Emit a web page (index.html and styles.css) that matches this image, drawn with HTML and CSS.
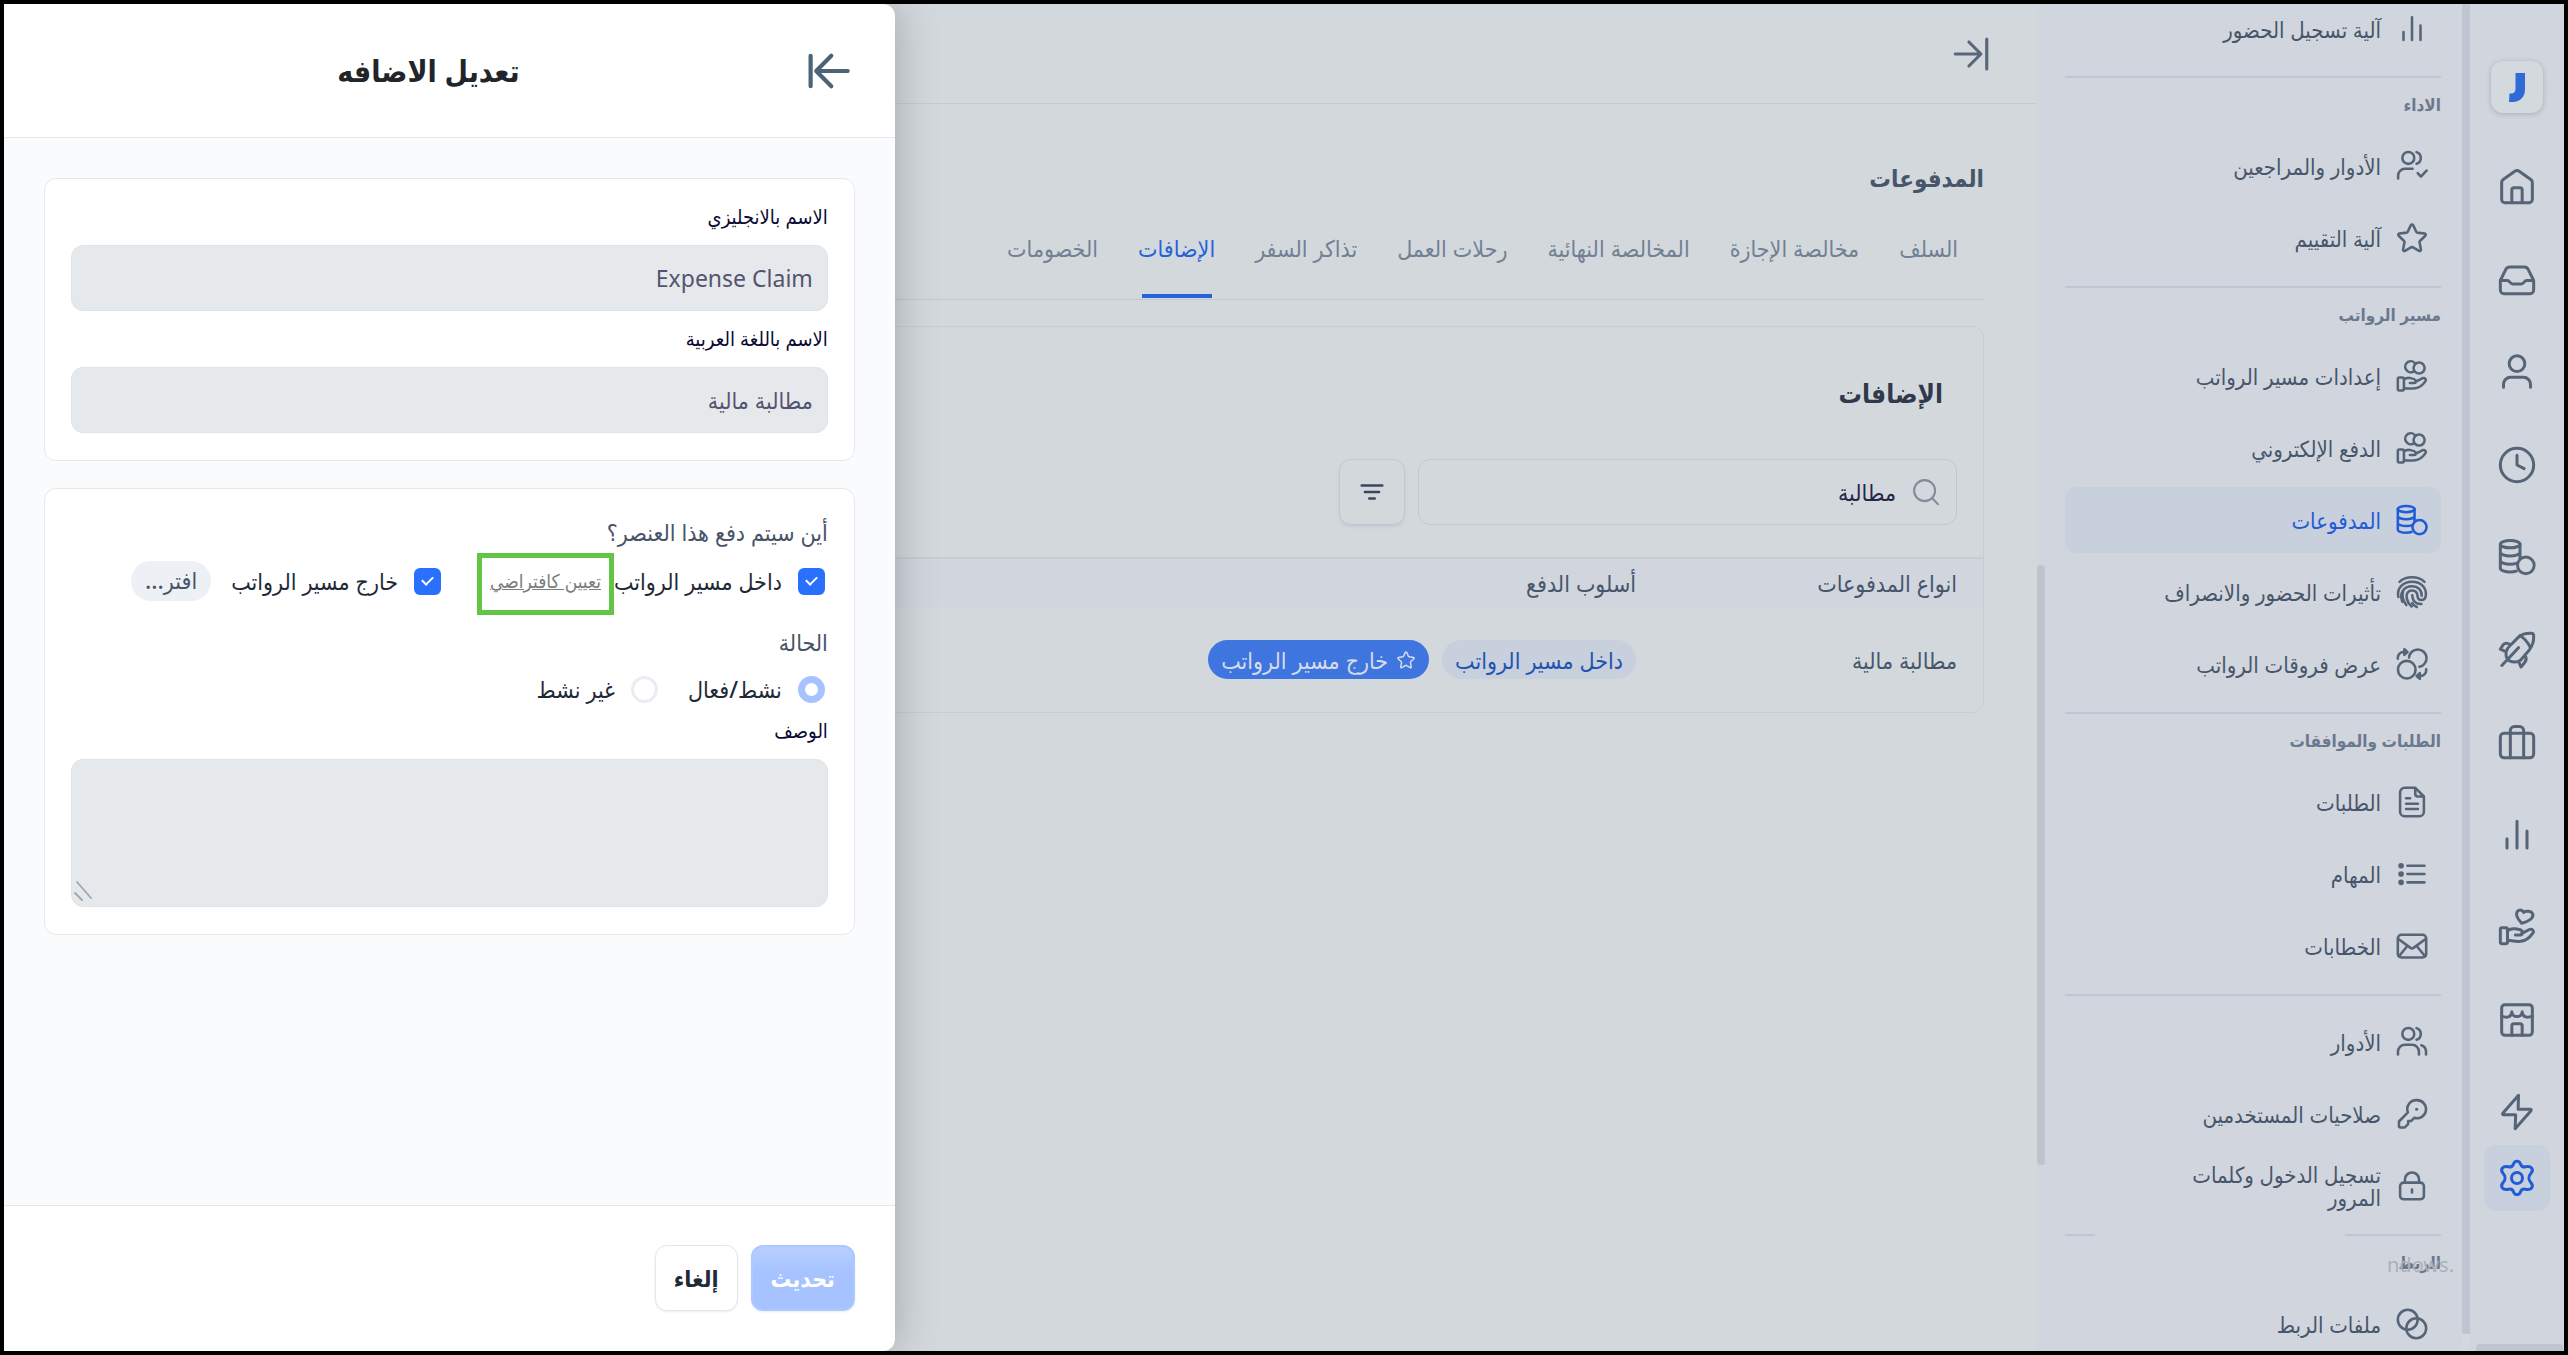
FILE: index.html
```html
<!DOCTYPE html>
<html lang="ar" dir="rtl">
<head>
    <meta charset="UTF-8">
    <meta name="viewport" content="width=device-width, initial-scale=1.0">
    <title>المدفوعات</title>
    <link rel="stylesheet" href="styles.css">
</head>
<body>

    <!-- icon set -->
    <svg class="icon-set" aria-hidden="true">
        <symbol id="i-bars" viewBox="0 0 24 24"><path d="M6 14.2v5.6M12 3.8v16M18 9.6v10.2"/></symbol>
        <symbol id="i-user-check" viewBox="0 0 24 24"><circle cx="9.4" cy="6.3" r="4.2"/><path d="M15.2 2.2a4.3 4.3 0 0 1 0 8.2M2.2 20.8v-2a4.8 4.8 0 0 1 4.8-4.8h5.4M16 17l2.3 2.5 4-4.3"/></symbol>
        <symbol id="i-users" viewBox="0 0 24 24"><circle cx="9.4" cy="6.3" r="4.2"/><path d="M15.2 2.2a4.3 4.3 0 0 1 0 8.2M2.1 20.8v-2A4.8 4.8 0 0 1 6.9 14h5.2a4.8 4.8 0 0 1 4.8 4.8v2M18.6 14.3a4.8 4.8 0 0 1 3.3 4.5v2"/></symbol>
        <symbol id="i-star" viewBox="0 0 24 24"><path d="M11.2 2.9a.9.9 0 0 1 1.6 0l2.3 4.9c.1.2.3.4.6.4l5.2.7c.8.1 1.1 1 .5 1.5l-3.8 3.7c-.2.2-.3.5-.3.7l1 5.4c.1.7-.6 1.3-1.3.9l-4.6-2.6a.9.9 0 0 0-.8 0L7 21.1c-.7.4-1.4-.2-1.3-.9l1-5.4c0-.2 0-.5-.3-.7l-3.8-3.7c-.6-.5-.3-1.4.5-1.5l5.2-.7c.3 0 .5-.2.6-.4z"/></symbol>
        <symbol id="i-hand-coins" viewBox="0 0 24 24"><circle cx="17" cy="6.4" r="3.9"/><path d="M13 8.900a3.900 3.900 0 1 1 1.500-5.400"/><rect x="2" y="13" width="4.300" height="9.200" rx="1"/><path d="M6.300 14.400c1.600-1.100 3.200-1.300 4.700-.9l2.500.7c1.500.4 1.600 2.600 0 2.700h-3M14.300 16.200l5-2.600c1.600-.7 3.100.7 2.100 2.200-1.800 2.600-4.400 4.600-7.200 4.900-2.800.3-5 .3-7.900-.2"/></symbol>
        <symbol id="i-hand-heart" viewBox="0 0 24 24"><path d="M14.8 9.8C12.600 7.400 11 5 12 3c.9-1.700 3.200-1.500 4 .2 1.500-1.100 4.600-.9 5.400.9.900 2.600-2.200 4.400-6.600 5.700z"/><rect x="2" y="12.500" width="4.300" height="9.500" rx="1"/><path d="M6.300 14.200c1.600-1.100 3.200-1.400 4.700-1.100l3 .6c1.700.5 1.500 2.900 0 3.100h-3M14.700 16l4.700-2.500c1.600-.7 3.100.7 2.100 2.200-1.800 2.600-4.400 4.600-7.200 4.900-2.800.3-5-.3-8-.6"/></symbol>
        <symbol id="i-coins" viewBox="0 0 24 24"><ellipse cx="7.9" cy="4.3" rx="5.9" ry="2.2"/><path d="M2 4.300v14.500c0 1.200 2.600 2.200 5.900 2.200 1.400 0 2.700-.2 3.700-.5M13.800 4.300v8.600M2 9.200c0 1.200 2.600 2.200 5.900 2.200s5.900-1 5.900-2.200M2 14.100c0 1.200 2.600 2.200 5.900 2.200 1.400 0 2.700-.2 3.700-.5"/><circle cx="17.300" cy="17" r="5"/></symbol>
        <symbol id="i-finger" viewBox="0 0 24 24"><path d="M3.200 4.800C5.500 2.600 8.600 1.600 12 1.600s6.500 1 8.800 3.200M2.400 15.500C1 9.300 5.600 4.800 12 4.800s10.600 4.200 9.700 10c-.5 3.800-5.600 3.700-5.800.1-.1-2.300-1.500-3.900-3.900-3.900-2.700 0-4.200 1.900-3.800 4.700.4 2.700 1.600 4.800 3.500 6.500M5.200 18.900C2.900 12.500 6.200 7.900 12 7.900c4.200 0 6.900 2.700 6.900 6.700M8 21.200c-2.500-3.500-3.300-6.700-2.300-9.300M12.200 14.300c.1 4 2.500 6.500 6.400 6.200M15.400 22.600c-1.600-.6-2.600-1.500-3.300-2.700"/></symbol>
        <symbol id="i-swap" viewBox="0 0 24 24"><circle cx="8.3" cy="16" r="6.2"/><path d="M9.900 7.400A6.200 6.200 0 1 1 17.200 14M2 8.300v-.8a4 4 0 0 1 4-4h1M22 15.700v.8a4 4 0 0 1-4 4h-1"/><path class="solid" d="M6.600 1.600l2.200 1.900-2.200 2.100zM17.500 18.400l-2.200 2.100 2.200 2z"/></symbol>
        <symbol id="i-doc" viewBox="0 0 24 24"><path d="M14.300 2H6.800A3.200 3.200 0 0 0 3.600 5.200v13.600A3.200 3.200 0 0 0 6.800 22h10.400a3.200 3.200 0 0 0 3.200-3.200V8.100zM14.300 2v4.400c0 1 .7 1.700 1.700 1.700h4.400M7.800 9.300h2.900M7.800 13.300h8.400M7.800 17h8.400"/></symbol>
        <symbol id="i-list" viewBox="0 0 24 24"><path d="M8.800 6.200h12M8.800 12h12M8.800 17.900h12"/><path class="dot" d="M4.300 6.200h0M4.300 12h0M4.300 17.900h0"/></symbol>
        <symbol id="i-mail" viewBox="0 0 24 24"><rect x="2" y="4.100" width="20" height="16" rx="2.500"/><path d="M2.600 7.200l8.600 6.300c.5.400 1.100.4 1.600 0l8.600-6.300M2.800 19.200L8.700 12M21.200 19.200L15.300 12"/></symbol>
        <symbol id="i-key" viewBox="0 0 24 24"><path d="M15.200 2.200a6.400 6.400 0 1 1-1.600 12.500l-2.100 2.200H9.300v2.200l-2.400 2.400H3.800a1 1 0 0 1-1-1v-3.200l6.300-6.400a6.400 6.400 0 0 1 6.100-8.700z"/><path class="dot-sm" d="M15.300 8.600h0"/></symbol>
        <symbol id="i-lock" viewBox="0 0 24 24"><rect x="3.600" y="9.600" width="16.800" height="11.800" rx="2.600"/><path d="M7 9.600V7.400a5 5 0 0 1 10 0v2.200M12 14.500v2"/></symbol>
        <symbol id="i-rings" viewBox="0 0 24 24"><circle cx="9" cy="9" r="7"/><circle cx="15" cy="15" r="7"/></symbol>
        <symbol id="i-home" viewBox="0 0 24 24"><path d="M2.800 9.300c0-.8.3-1.400.9-1.800l7-4.900a2.200 2.200 0 0 1 2.600 0l7 4.900c.6.400.9 1 .9 1.800v10.200a1.900 1.900 0 0 1-1.900 1.900H4.700a1.900 1.900 0 0 1-1.900-1.900zM8.900 21.400v-7.700c0-.7.500-1.300 1.200-1.300h3.800c.7 0 1.200.6 1.200 1.300v7.700"/></symbol>
        <symbol id="i-inbox" viewBox="0 0 24 24"><path d="M2 12.300l3.200-6.500A2.600 2.600 0 0 1 7.600 4.200h8.800c1 0 1.900.6 2.400 1.600l3.200 6.500v5.500a2.500 2.500 0 0 1-2.500 2.500h-15A2.500 2.500 0 0 1 2 17.800zM2 12.300h4.200c1.500 0 1.500 2.100 3.300 2.100h5c1.800 0 1.800-2.100 3.300-2.100H22"/></symbol>
        <symbol id="i-user" viewBox="0 0 24 24"><circle cx="12" cy="7" r="4.700"/><path d="M3.900 21.200v-1.800a4.200 4.200 0 0 1 4.200-4.200h7.800a4.200 4.200 0 0 1 4.200 4.200v1.800"/></symbol>
        <symbol id="i-clock" viewBox="0 0 24 24"><circle cx="12" cy="12" r="10"/><path d="M12 6.200V12l4.300 2.200"/></symbol>
        <symbol id="i-rocket" viewBox="0 0 24 24"><path d="M5.600 12.800c-.5 2.600.2 5 1.900 5.700 2 .8 4.300 1.100 6.600-.4l5.300-6.100c1.900-2.700 2.800-5.600 2.600-8.500a1.600 1.600 0 0 0-1.500-1.500c-3-.1-5.600.5-7.600 2.300l-5.300 5.300c-1 .9-1.600 1.900-2 3.200zM13.700 3.300c2.200 1.200 4.600 3.700 6.400 7.300M8 9.200c-1.300-1.800-3.600-1.300-4.400-.2L2 11.500l3.600 1.600M17.200 15.900c.6 1.400.5 2.300-.6 3.600l-2.200 2.700-1.500-3.400M2.900 21.300l10-10.700"/></symbol>
        <symbol id="i-case" viewBox="0 0 24 24"><rect x="2" y="6.800" width="20" height="14.600" rx="2.200"/><path d="M8 21.400V5.200c0-1.400 1.100-2.500 2.500-2.500h3c1.400 0 2.500 1.100 2.500 2.500v16.200"/></symbol>
        <symbol id="i-shop" viewBox="0 0 24 24"><rect x="2.800" y="2.800" width="18.400" height="18.400" rx="2"/><path d="M2.800 9.700c2.600 1 6.100 1 6.100-2.700 0 3.900 6.200 3.900 6.200 0 0 3.700 3.500 3.700 6.100 2.700M8.900 21.200v-5.700c0-.7.500-1.300 1.200-1.300h3.800c.7 0 1.200.6 1.200 1.300v5.700"/></symbol>
        <symbol id="i-bolt" viewBox="0 0 24 24"><path d="M12.900 2L3.500 12.800c-.3.500-.1.900.4.900h7.300L10.900 22l9.500-10.800c.4-.5.100-.9-.4-.9h-7.300z"/></symbol>
        <symbol id="i-gear" viewBox="0 0 24 24"><path d="M10 3.500c.6-2 3.400-2 4 0 .6 1.700 1.300 2.200 3 1.800 3.700-.8 5.400 1.600 3.300 4-1.500 1.600-1.500 3.800 0 5.400 2.100 2.400.4 4.800-3.300 4-1.700-.4-2.400.1-3 1.800-.6 2-3.400 2-4 0-.6-1.700-1.300-2.200-3-1.800-3.700.8-5.400-1.600-3.300-4 1.500-1.600 1.500-3.800 0-5.400-2.100-2.400-.4-4.800 3.300-4 1.700.4 2.400-.1 3-1.800z"/><circle cx="12" cy="12" r="3.300"/></symbol>
        <symbol id="i-to-end" viewBox="0 0 24 24"><path d="M1.500 12h16.800M10.600 4l8 8-8 8M22.500 2v20"/></symbol>
        <symbol id="i-to-start" viewBox="0 0 24 24"><path d="M22.700 12H5M13.300 3.300L4.700 12l8.600 8.700M1.500 3.300v17.400"/></symbol>
        <symbol id="i-search" viewBox="0 0 24 24"><circle cx="10.800" cy="10.800" r="9"/><path d="M17.400 17.400l4.800 5"/></symbol>
        <symbol id="i-filter" viewBox="0 0 24 24"><path d="M2.500 6h19M5.500 12h13M9.500 18h5"/></symbol>
    </svg>

    <nav class="rail">
        <a class="logo" href="#" aria-label="الشعار">
            <svg viewBox="0 0 16 29"><path d="M6.500 0H16v16.500C16 24 11 29 4 29H0l.5-8.500H2c3 0 4.500-1.800 4.500-5z"/></svg>
        </a>
        <div class="rail-links">
            <a class="rail-link" href="#" aria-label="الرئيسية"><svg><use href="#i-home"/></svg></a>
            <a class="rail-link" href="#" aria-label="الوارد"><svg><use href="#i-inbox"/></svg></a>
            <a class="rail-link" href="#" aria-label="الموظفون"><svg><use href="#i-user"/></svg></a>
            <a class="rail-link" href="#" aria-label="الوقت"><svg><use href="#i-clock"/></svg></a>
            <a class="rail-link" href="#" aria-label="الرواتب"><svg><use href="#i-coins"/></svg></a>
            <a class="rail-link" href="#" aria-label="الأداء"><svg><use href="#i-rocket"/></svg></a>
            <a class="rail-link" href="#" aria-label="التوظيف"><svg><use href="#i-case"/></svg></a>
            <a class="rail-link" href="#" aria-label="التقارير"><svg><use href="#i-bars"/></svg></a>
            <a class="rail-link" href="#" aria-label="المزايا"><svg><use href="#i-hand-heart"/></svg></a>
            <a class="rail-link" href="#" aria-label="المتجر"><svg><use href="#i-shop"/></svg></a>
            <a class="rail-link" href="#" aria-label="الأتمتة"><svg><use href="#i-bolt"/></svg></a>
        </div>
        <a class="rail-link active" href="#" aria-label="الإعدادات"><svg><use href="#i-gear"/></svg></a>
        <span class="rail-thumb"></span>
        <span class="rail-foot"></span>
    </nav>

    <aside class="sidebar">
        <section class="group first">
            <a class="item" href="#"><svg><use href="#i-bars"/></svg><span>آلية تسجيل الحضور</span></a>
        </section>
        <section class="group">
            <h3>الاداء</h3>
            <a class="item" href="#"><svg><use href="#i-user-check"/></svg><span>الأدوار والمراجعين</span></a>
            <a class="item" href="#"><svg><use href="#i-star"/></svg><span>آلية التقييم</span></a>
        </section>
        <section class="group">
            <h3>مسير الرواتب</h3>
            <a class="item" href="#"><svg><use href="#i-hand-coins"/></svg><span>إعدادات مسير الرواتب</span></a>
            <a class="item" href="#"><svg><use href="#i-hand-coins"/></svg><span>الدفع الإلكتروني</span></a>
            <a class="item active" href="#"><svg><use href="#i-coins"/></svg><span>المدفوعات</span></a>
            <a class="item" href="#"><svg><use href="#i-finger"/></svg><span>تأثيرات الحضور والانصراف</span></a>
            <a class="item" href="#"><svg><use href="#i-swap"/></svg><span>عرض فروقات الرواتب</span></a>
        </section>
        <section class="group">
            <h3>الطلبات والموافقات</h3>
            <a class="item" href="#"><svg><use href="#i-doc"/></svg><span>الطلبات</span></a>
            <a class="item" href="#"><svg><use href="#i-list"/></svg><span>المهام</span></a>
            <a class="item" href="#"><svg><use href="#i-mail"/></svg><span>الخطابات</span></a>
        </section>
        <section class="group">
            <a class="item" href="#"><svg><use href="#i-users"/></svg><span>الأدوار</span></a>
            <a class="item" href="#"><svg><use href="#i-key"/></svg><span>صلاحيات المستخدمين</span></a>
            <a class="item" href="#"><svg><use href="#i-lock"/></svg><span>تسجيل الدخول وكلمات المرور</span></a>
        </section>
        <section class="group broken">
            <h3>الربط</h3>
            <a class="item" href="#"><svg><use href="#i-rings"/></svg><span>ملفات الربط</span></a>
        </section>
        <span class="side-thumb"></span>
        <span class="watermark" dir="ltr">ndows.</span>
    </aside>

    <main class="content">
        <header class="topbar">
            <button class="icon-btn" aria-label="طي القائمة"><svg><use href="#i-to-end"/></svg></button>
        </header>
        <div class="page">
            <h1>المدفوعات</h1>
            <nav class="tabs">
                <a href="#">السلف</a>
                <a href="#">مخالصة الإجازة</a>
                <a href="#">المخالصة النهائية</a>
                <a href="#">رحلات العمل</a>
                <a href="#">تذاكر السفر</a>
                <a class="active" href="#">الإضافات</a>
                <a href="#">الخصومات</a>
            </nav>
            <section class="panel">
                <h2>الإضافات</h2>
                <div class="tools">
                    <label class="search">
                        <svg><use href="#i-search"/></svg>
                        <input type="text" value="مطالبة" aria-label="بحث">
                    </label>
                    <button class="filter" aria-label="تصفية"><svg><use href="#i-filter"/></svg></button>
                </div>
                <table>
                    <thead>
                        <tr><th class="col-type">انواع المدفوعات</th><th>أسلوب الدفع</th></tr>
                    </thead>
                    <tbody>
                        <tr>
                            <td>مطالبة مالية</td>
                            <td>
                                <div class="badges">
                                    <span class="badge">داخل مسير الرواتب</span>
                                    <span class="badge solid"><svg><use href="#i-star"/></svg>خارج مسير الرواتب</span>
                                </div>
                            </td>
                        </tr>
                    </tbody>
                </table>
            </section>
        </div>
    </main>

    <form class="drawer">
        <header class="drawer-head">
            <button type="button" class="icon-btn" aria-label="إغلاق"><svg><use href="#i-to-start"/></svg></button>
            <h2>تعديل الاضافه</h2>
        </header>
        <div class="drawer-body">
            <section class="box">
                <label class="field-label" for="name-en">الاسم بالانجليزي</label>
                <input class="field" id="name-en" type="text" value="Expense Claim" disabled>
                <label class="field-label" for="name-ar">الاسم باللغة العربية</label>
                <input class="field" id="name-ar" type="text" value="مطالبة مالية" disabled>
            </section>
            <section class="box">
                <p class="question">أين سيتم دفع هذا العنصر؟</p>
                <div class="options checks">
                    <div class="option">
                        <label><input type="checkbox" checked>داخل مسير الرواتب</label>
                        <a class="set-default" href="#">تعيين كافتراضي</a>
                    </div>
                    <div class="option">
                        <label><input type="checkbox" checked>خارج مسير الرواتب</label>
                        <span class="chip">افتر...</span>
                    </div>
                </div>
                <p class="question">الحالة</p>
                <div class="options radios">
                    <label><input type="radio" name="status" checked disabled>نشط/فعال</label>
                    <label><input type="radio" name="status" disabled>غير نشط</label>
                </div>
                <label class="field-label" for="desc">الوصف</label>
                <div class="area-wrap">
                    <textarea class="field" id="desc" disabled></textarea>
                    <svg class="grip" viewBox="0 0 20 20"><path d="M4 1l14 16M2 12l7 7"/></svg>
                </div>
            </section>
        </div>
        <footer class="drawer-foot">
            <button type="submit" class="btn primary" disabled>تحديث</button>
            <button type="button" class="btn">إلغاء</button>
        </footer>
    </form>

</body>
</html>
```
FILE: styles.css
```css
* {
    box-sizing: border-box;
}
body {
    margin: 0;
    height: 100vh;
    border: 4px solid #000;
    display: flex;
    position: relative;
    overflow: hidden;
    background-color: #d3d8dc;
    color: #47566b;
    font-family: "Noto Sans", "DejaVu Sans Condensed", "DejaVu Sans", sans-serif;
    font-size: 23px;
}
h1, h2, h3, p {
    margin: 0;
}
a {
    color: inherit;
    text-decoration: none;
}
button, input, textarea {
    font: inherit;
    color: inherit;
}
svg {
    display: block;
    flex-shrink: 0;
    fill: none;
    stroke: currentColor;
    stroke-width: 1.8;
    stroke-linecap: round;
    stroke-linejoin: round;
}
.icon-set {
    display: none;
}
.dot {
    stroke-width: 4;
}
.dot-sm {
    stroke-width: 2.2;
}
.solid {
    fill: currentColor;
}
.icon-btn {
    padding: 0;
    border: none;
    background: none;
}

/* icon rail */
.rail {
    position: relative;
    width: 102px;
    flex-shrink: 0;
    display: flex;
    flex-direction: column;
    align-items: center;
    padding: 57px 0 140px;
    background-color: #d1d5dd;
    color: #566477;
    border-left: 8px solid #bfc4d0;
}
.logo {
    width: 52px;
    height: 52px;
    display: flex;
    align-items: center;
    justify-content: center;
    border-radius: 12px;
    background-color: #d4d9dd;
    box-shadow: 0 1px 5px rgba(70, 80, 100, 0.3);
}
.logo svg {
    width: 16px;
    height: 29px;
    fill: #306ad6;
    stroke: none;
}
.rail-links {
    flex: 1;
    display: flex;
    flex-direction: column;
    justify-content: space-between;
    margin-top: 41px;
}
.rail-link {
    width: 66px;
    height: 66px;
    display: flex;
    align-items: center;
    justify-content: center;
    border-radius: 12px;
}
.rail-link svg {
    width: 40px;
    height: 40px;
}
.rail-link.active {
    background-color: #c8cfdd;
    color: #1f5cd6;
}
.rail-thumb {
    position: absolute;
    left: -8px;
    bottom: 0;
    width: 8px;
    height: 17px;
    background-color: #d3d8dc;
}
.rail-foot {
    position: absolute;
    left: 6px;
    right: 1px;
    bottom: 0;
    height: 7px;
    border-radius: 4px 4px 0 0;
    background-color: #bfc4d0;
}

/* settings menu */
.sidebar {
    position: relative;
    width: 425px;
    flex-shrink: 0;
    overflow: hidden;
    padding: 0 21px 0 28px;
    background-color: #d1d5dd;
    font-size: 22px;
}
.group {
    display: flex;
    flex-direction: column;
    gap: 6px;
    padding: 13px 0 15px;
    border-top: 2px solid #bfc6d3;
}
.group.first {
    height: 72px;
    padding: 0 0 14px;
    border: none;
    justify-content: flex-end;
}
.group h3 {
    margin-bottom: 8px;
    font-size: 17px;
    line-height: 28px;
    font-weight: 600;
    color: #6b798e;
}
.group.broken {
    border-top: none;
    background-image: linear-gradient(to left, #bfc6d3 96px, transparent 96px, transparent 346px, #bfc6d3 346px);
    background-size: 100% 2px;
    background-repeat: no-repeat;
    padding-top: 15px;
}
.item {
    height: 66px;
    flex-shrink: 0;
    display: flex;
    align-items: center;
    gap: 14px;
    padding: 0 12px 0 76px;
    border-radius: 12px;
    line-height: 23px;
    font-weight: 500;
}
.item svg {
    width: 34px;
    height: 34px;
    color: #566477;
}
.item.active, .item.active svg {
    color: #1f5cd6;
}
.item.active {
    background-color: #c8cfdd;
}
.side-thumb {
    position: absolute;
    left: 0;
    top: 561px;
    width: 8px;
    height: 600px;
    border-radius: 4px;
    background-color: #bdc4ce;
}
.watermark {
    position: absolute;
    right: 8px;
    bottom: 72px;
    font-size: 20px;
    line-height: 28px;
    color: #adb1b5;
}

/* payments page */
.content {
    flex: 1;
    min-width: 0;
}
.topbar {
    height: 100px;
    display: flex;
    align-items: center;
    padding: 0 48px;
    border-bottom: 1px solid #c6cbcf;
    color: #5a677a;
}
.topbar svg {
    width: 36px;
    height: 36px;
    stroke-width: 2.1;
}
.page {
    padding: 52px 53px 0;
}
h1 {
    font-size: 24px;
    line-height: 44px;
    font-weight: 700;
}
.tabs {
    display: flex;
    gap: 40px;
    height: 100px;
    padding: 0 26px;
    border-bottom: 1px solid #c0c6d2;
    color: #728093;
    line-height: 96px;
}
.tabs a {
    white-space: nowrap;
}
.tabs .active {
    height: 98px;
    color: #2762d8;
    background: linear-gradient(#2762d8, #2762d8) center bottom / 70px 4px no-repeat;
}
.panel {
    margin-top: 26px;
    border: 1px solid #c8cdd1;
    border-radius: 12px;
    overflow: hidden;
}
.panel h2 {
    padding: 44px 40px 0;
    font-size: 26px;
    line-height: 44px;
    color: #303a4b;
}
.tools {
    display: flex;
    gap: 13px;
    padding: 44px 26px 32px;
}
.search {
    width: 539px;
    height: 66px;
    display: flex;
    align-items: center;
    gap: 16px;
    padding: 0 16px;
    border: 1px solid #bfc7d2;
    border-radius: 12px;
}
.search svg {
    width: 28px;
    height: 28px;
    color: #848c9a;
}
.search input {
    flex: 1;
    min-width: 0;
    padding: 0;
    border: none;
    outline: none;
    background: none;
    color: #24264a;
}
.filter {
    width: 66px;
    height: 66px;
    display: flex;
    align-items: center;
    justify-content: center;
    padding: 0;
    border: 1px solid #bfc7d5;
    border-radius: 12px;
    background: none;
    color: #3a4659;
    box-shadow: 0 2px 3px rgba(100, 120, 160, 0.15);
}
.filter svg {
    width: 26px;
    height: 26px;
    stroke-width: 2.4;
}
table {
    width: 100%;
    border-collapse: collapse;
    border-top: 2px solid #c8cdd1;
    text-align: right;
}
th {
    height: 49px;
    padding: 0 26px;
    background-color: #d1d5dd;
    font-weight: 500;
}
td {
    height: 105px;
    padding: 0 26px;
}
.col-type {
    width: 320px;
}
th:last-child, td:last-child {
    padding-right: 27px;
}
.badges {
    display: flex;
    gap: 13px;
}
.badge {
    height: 39px;
    display: flex;
    align-items: center;
    gap: 8px;
    padding: 0 13px;
    border-radius: 20px;
    background-color: #c8cfdd;
    color: #2253b0;
    font-weight: 500;
    white-space: nowrap;
}
.badge.solid {
    background-color: #3f75df;
    color: #d5dcea;
}
.badge svg {
    width: 20px;
    height: 20px;
}

/* edit drawer */
.drawer {
    position: absolute;
    left: 0;
    top: 0;
    bottom: 0;
    width: 34.8%;
    display: flex;
    flex-direction: column;
    border-radius: 0 12px 12px 0;
    overflow: hidden;
    background-color: #fff;
    box-shadow: 0 0 40px rgba(60, 70, 80, 0.35);
    color: #1f2937;
}
.drawer-head {
    height: 134px;
    display: flex;
    align-items: center;
    padding: 0 45px;
    border-bottom: 1px solid #e5e9ec;
}
.drawer-head svg {
    width: 42px;
    height: 42px;
    stroke-width: 2.4;
    color: #4b6478;
}
.drawer-head h2 {
    flex: 1;
    text-align: center;
    font-size: 30px;
    color: #212529;
}
.drawer-body {
    flex: 1;
    display: flex;
    flex-direction: column;
    gap: 27px;
    padding: 40px;
    background-color: #fafbfd;
}
.box {
    display: flex;
    flex-direction: column;
    padding: 24px 26px 27px;
    border: 1px solid #e5e9ec;
    border-radius: 12px;
    background-color: #fff;
}
.field-label {
    font-size: 20px;
    line-height: 28px;
    margin-bottom: 14px;
    color: #0c0a33;
    font-weight: 500;
}
.field {
    width: 100%;
    height: 66px;
    padding: 0 14px;
    border: 1px solid #dfe3e7;
    border-radius: 12px;
    background-color: #e6e9ec;
    color: #54546f;
}
.field + .field-label {
    margin-top: 14px;
}
.question {
    line-height: 38px;
    color: #475467;
}
.options {
    display: flex;
    color: #1f2937;
    font-weight: 500;
}
.options label {
    display: flex;
    align-items: center;
    gap: 16px;
    line-height: 27px;
    white-space: nowrap;
}
.options input {
    appearance: none;
    display: flex;
    align-items: center;
    justify-content: center;
    width: 27px;
    height: 27px;
    flex-shrink: 0;
    margin: 0;
}
.checks {
    gap: 36px;
    padding: 2px 3px 8px;
}
.option {
    display: flex;
    align-items: flex-start;
}
.option label {
    height: 56px;
}
.options [type="checkbox"] {
    border-radius: 6px;
    background-color: #2970ff;
}
.options [type="checkbox"]::after {
    content: "";
    width: 5px;
    height: 9px;
    margin-bottom: 3px;
    border: solid #fff;
    border-width: 0 2px 2px 0;
    transform: rotate(45deg);
}
.set-default {
    height: 62px;
    padding: 0 8px;
    border: 5px solid #62c546;
    font-size: 19px;
    line-height: 46px;
    font-weight: 400;
    color: #7c7c7c;
    text-decoration: underline;
    white-space: nowrap;
}
.chip {
    height: 40px;
    margin: 8px 20px 0 0;
    padding: 0 14px;
    border-radius: 20px;
    background-color: #edf0f5;
    line-height: 38px;
    color: #475467;
}
.radios {
    gap: 30px;
    padding: 15px 3px 14px;
}
.options [type="radio"] {
    border: 3px solid #e9edf3;
    border-radius: 50%;
    background-color: #fff;
}
.options [type="radio"]:checked {
    border: 7px solid #a6c3ff;
}
.area-wrap {
    position: relative;
}
textarea.field {
    display: block;
    height: 148px;
    resize: none;
}
.grip {
    position: absolute;
    left: 2px;
    bottom: 6px;
    width: 20px;
    height: 20px;
    color: #9ea5b3;
}
.drawer-foot {
    height: 146px;
    display: flex;
    gap: 13px;
    padding: 39px 40px;
    border-top: 1px solid #e5e9ec;
}
.btn {
    height: 66px;
    padding: 0 18px;
    border: 1px solid #e2e6ee;
    border-radius: 12px;
    background-color: #fff;
    font-weight: 600;
    box-shadow: 0 1px 2px rgba(16, 24, 40, 0.08);
}
.btn.primary {
    border: 2px solid #adc7ff;
    background: linear-gradient(#b9cfff, #a6c3ff 40%);
    color: #fff;
}
```
